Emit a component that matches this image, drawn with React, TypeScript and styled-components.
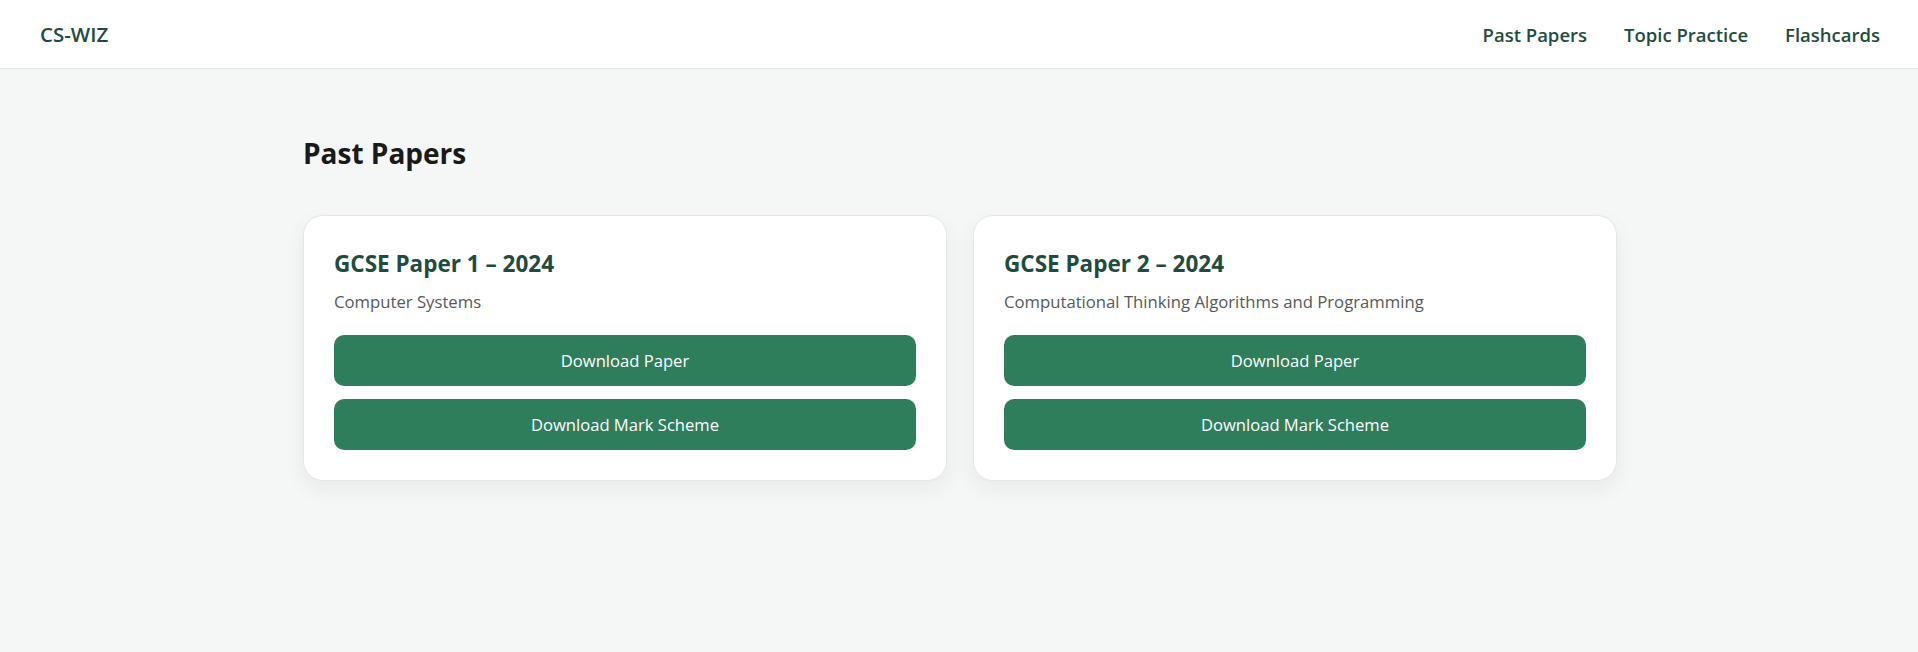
import React from "react";
import styled, { createGlobalStyle } from "styled-components";

const GlobalStyle = createGlobalStyle`
  * { box-sizing: border-box; }
  html, body { margin: 0; padding: 0; }
  body {
    background: #f5f7f6;
    font-family: "Open Sans", "Noto Sans", "Liberation Sans", sans-serif;
    color: #1a1a1a;
  }
`;

const Header = styled.header`
  height: 69px;
  background: #ffffff;
  border-bottom: 1px solid #e3e6e5;
  display: flex;
  align-items: center;
  justify-content: space-between;
  padding: 0 38px 0 40px;
`;

const Logo = styled.div`
  font-size: 20.5px;
  font-weight: 600;
  color: #1d4d3f;
`;

const Nav = styled.nav`
  display: flex;
  align-items: center;
  gap: 37px;
`;

const NavLink = styled.a`
  font-size: 18.5px;
  font-weight: 600;
  color: #1d4d3f;
  text-decoration: none;
  cursor: pointer;
`;

const Main = styled.main`
  max-width: 1314px;
  margin: 0 auto;
  padding: 66px 0 80px;
  position: relative;
  left: 1px;
`;

const PageTitle = styled.h2`
  margin: 0 0 44px;
  font-size: 28px;
  line-height: 36px;
  font-weight: 700;
  color: #1a1a1a;
`;

const Grid = styled.div`
  display: grid;
  grid-template-columns: 1fr 1fr;
  gap: 26px;
`;

const Card = styled.section`
  background: #ffffff;
  border: 1px solid #e4e7e6;
  border-radius: 20px;
  padding: 30px;
  box-shadow: 0 8px 22px rgba(20, 40, 30, 0.06);
  display: flex;
  flex-direction: column;
`;

const CardTitle = styled.h3`
  margin: 0 0 6px;
  font-size: 22.5px;
  line-height: 36px;
  font-weight: 700;
  color: #1d4d3f;
`;

const CardSubtitle = styled.p`
  margin: 0 0 20px;
  font-size: 16.7px;
  line-height: 27px;
  color: #555a58;
`;

const Actions = styled.div`
  display: flex;
  flex-direction: column;
  gap: 13px;
`;

const Button = styled.button`
  height: 51px;
  width: 100%;
  border: none;
  border-radius: 10px;
  background: #2e7d5b;
  color: #ffffff;
  font-family: inherit;
  font-size: 16.6px;
  cursor: pointer;
`;

const papers = [
  { title: "GCSE Paper 1 – 2024", subtitle: "Computer Systems" },
  {
    title: "GCSE Paper 2 – 2024",
    subtitle: "Computational Thinking Algorithms and Programming",
  },
];

export default function App() {
  return (
    <>
      <GlobalStyle />
      <Header>
        <Logo>CS-WIZ</Logo>
        <Nav>
          <NavLink>Past Papers</NavLink>
          <NavLink>Topic Practice</NavLink>
          <NavLink>Flashcards</NavLink>
        </Nav>
      </Header>
      <Main>
        <PageTitle>Past Papers</PageTitle>
        <Grid>
          {papers.map((p) => (
            <Card key={p.title}>
              <CardTitle>{p.title}</CardTitle>
              <CardSubtitle>{p.subtitle}</CardSubtitle>
              <Actions>
                <Button>Download Paper</Button>
                <Button>Download Mark Scheme</Button>
              </Actions>
            </Card>
          ))}
        </Grid>
      </Main>
    </>
  );
}
